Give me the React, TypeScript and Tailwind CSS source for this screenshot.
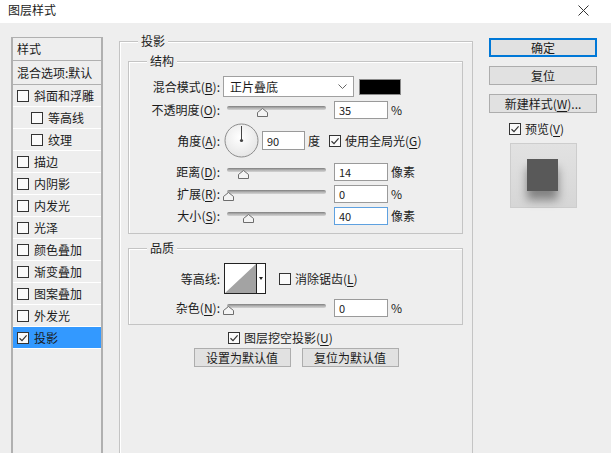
import type { ReactNode } from "react";

const effects = [
  { label: "斜面和浮雕" },
  { label: "等高线", indent: true },
  { label: "纹理", indent: true },
  { label: "描边" },
  { label: "内阴影" },
  { label: "内发光" },
  { label: "光泽" },
  { label: "颜色叠加" },
  { label: "渐变叠加" },
  { label: "图案叠加" },
  { label: "外发光" },
  { label: "投影", checked: true, active: true },
];

function CheckBox({ checked = false }: { checked?: boolean }) {
  return (
    <span className="flex h-[12px] w-[12px] shrink-0 items-center justify-center border border-[#333] bg-[#fafafa]">
      {checked && (
        <svg width="10" height="10" viewBox="0 0 10 10">
          <path d="M1.5 5.2 L4 7.6 L8.6 2.4" fill="none" stroke="#333" strokeWidth="1.2" />
        </svg>
      )}
    </span>
  );
}

function Key({ k }: { k: string }) {
  return (
    <>
      (<span className="underline underline-offset-2">{k}</span>)
    </>
  );
}

function Label({ children }: { children: ReactNode }) {
  return <div className="w-[91px] shrink-0 text-right whitespace-nowrap">{children}</div>;
}

function Slider({ pos }: { pos: number }) {
  return (
    <div className="relative ml-[7px] h-[18px] w-[99px] shrink-0">
      <div className="absolute left-0 right-0 top-[5px] h-[4px] rounded-full bg-gradient-to-b from-[#7e7e7e] via-[#b2b2b2] to-[#d4d4d4]" />
      <svg
        className="absolute top-[7px]"
        style={{ left: pos - 5 }}
        width="11"
        height="9"
        viewBox="0 0 11 9"
      >
        <path d="M0.5 4.5 L5.5 0.5 L10.5 4.5 L10.5 8.5 L0.5 8.5 Z" fill="#f4f4f4" stroke="#6d6d6d" />
      </svg>
    </div>
  );
}

function NumInput({ value, focused = false }: { value: string; focused?: boolean }) {
  return (
    <div
      className={`ml-[8px] flex h-[18px] w-[54px] shrink-0 items-center border bg-white pl-[4px] text-[11px] ${
        focused ? "border-[#5ea1e0]" : "border-[#9a9a9a]"
      }`}
    >
      {value}
    </div>
  );
}

function GroupBox({ title, className, children }: { title: string; className: string; children: ReactNode }) {
  return (
    <div className={`relative border border-[#c4c4c4] shadow-[inset_1px_1px_0_#ffffff] ${className}`}>
      <span className="absolute left-[18px] top-[-9px] bg-[#eeeeee] px-[3px] leading-[16px]">{title}</span>
      {children}
    </div>
  );
}

function Button({ children, primary = false, className = "" }: { children: ReactNode; primary?: boolean; className?: string }) {
  return (
    <div
      className={`flex h-[19px] items-center justify-center border bg-[#e1e1e1] leading-none ${
        primary ? "border-[#0078d7] shadow-[inset_0_0_0_1px_#0078d7]" : "border-[#adadad]"
      } ${className}`}
    >
      {children}
    </div>
  );
}

export default function App() {
  return (
    <div className="h-[453px] w-[611px] overflow-hidden bg-[#eeeeee] font-['Noto_Sans_CJK_SC',sans-serif] text-[12px] leading-[16px] text-[#1b1b1b]">
      {/* title bar */}
      <div className="flex h-[23px] items-center justify-between bg-white pl-[8px] pr-[22px]">
        <span className="-mt-[3px]">图层样式</span>
        <svg className="-mt-[3px]" width="11" height="11" viewBox="0 0 11 11">
          <path d="M0.5 0.5 L10.5 10.5 M10.5 0.5 L0.5 10.5" stroke="#333" strokeWidth="1" />
        </svg>
      </div>

      <div className="flex pl-[11px]">
        {/* effects list */}
        <div className="mt-[14px] h-[420px] w-[92px] shrink-0 border-x-2 border-t border-[#b0b0b0]">
          <div className="flex h-[23px] items-center border-b border-[#b0b0b0] pl-[4px]">样式</div>
          <div className="flex h-[24px] items-center border-b border-[#b0b0b0] pl-[4px] whitespace-nowrap">
            混合选项:默认
          </div>
          {effects.map((item) => (
            <div
              key={item.label}
              className={`flex h-[22px] items-center gap-[5px] border-b border-white ${
                item.indent ? "pl-[18px]" : "pl-[4px]"
              } ${item.active ? "bg-[#3399ff]" : ""}`}
            >
              <CheckBox checked={item.checked} />
              <span>{item.label}</span>
            </div>
          ))}
        </div>

        {/* main panel */}
        <div className="relative ml-[16px] mt-[18px] h-[430px] w-[354px] shrink-0 border border-[#c4c4c4] shadow-[inset_1px_1px_0_#ffffff]">
          <span className="absolute left-[18px] top-[-9px] bg-[#eeeeee] px-[3px] leading-[16px]">投影</span>

          <GroupBox title="结构" className="ml-[8px] mt-[19px] w-[335px] pb-[8px]">
            <div className="mt-[14px] flex h-[21px] items-center">
              <Label>
                混合模式<Key k="B" />:
              </Label>
              <div className="ml-[3px] flex h-[21px] w-[131px] items-center justify-between border border-[#a0a0a0] bg-white pl-[6px] pr-[6px]">
                <span>正片叠底</span>
                <svg width="9" height="6" viewBox="0 0 9 6">
                  <path d="M0.5 0.5 L4.5 4.5 L8.5 0.5" fill="none" stroke="#666" />
                </svg>
              </div>
              <div className="ml-[5px] h-[16px] w-[42px] border border-[#8a8a8a] bg-black" />
            </div>

            <div className="mt-[4px] flex h-[18px] items-center">
              <Label>
                不透明度<Key k="O" />:
              </Label>
              <Slider pos={35} />
              <NumInput value="35" />
              <span className="ml-[3px]">%</span>
            </div>

            <div className="mt-[4px] flex h-[35px] items-center">
              <Label>
                角度<Key k="A" />:
              </Label>
              <svg className="ml-[4px] shrink-0" width="35" height="35" viewBox="0 0 35 35">
                <defs>
                  <radialGradient id="dial" cx="45%" cy="40%" r="60%">
                    <stop offset="0" stopColor="#ffffff" />
                    <stop offset="1" stopColor="#e6e6e6" />
                  </radialGradient>
                </defs>
                <circle cx="17.5" cy="17.5" r="16.5" fill="url(#dial)" stroke="#8c8c8c" />
                <line x1="17.5" y1="3" x2="17.5" y2="17.5" stroke="#444" strokeWidth="1" />
                <circle cx="17.5" cy="17.5" r="1.6" fill="#444" />
              </svg>
              <div className="ml-[3px] flex h-[19px] w-[43px] shrink-0 items-center border border-[#9a9a9a] bg-white pl-[4px] text-[11px]">
                90
              </div>
              <span className="ml-[3px]">度</span>
              <span className="ml-[9px]">
                <CheckBox checked />
              </span>
              <span className="ml-[4px] whitespace-nowrap">
                使用全局光<Key k="G" />
              </span>
            </div>

            <div className="mt-[5px] flex h-[18px] items-center">
              <Label>
                距离<Key k="D" />:
              </Label>
              <Slider pos={16} />
              <NumInput value="14" />
              <span className="ml-[3px]">像素</span>
            </div>

            <div className="mt-[4px] flex h-[18px] items-center">
              <Label>
                扩展<Key k="R" />:
              </Label>
              <Slider pos={1} />
              <NumInput value="0" />
              <span className="ml-[3px]">%</span>
            </div>

            <div className="mt-[4px] flex h-[18px] items-center">
              <Label>
                大小<Key k="S" />:
              </Label>
              <Slider pos={21} />
              <NumInput value="40" focused />
              <span className="ml-[3px]">像素</span>
            </div>
          </GroupBox>

          <GroupBox title="品质" className="ml-[8px] mt-[14px] w-[335px] pb-[7px]">
            <div className="mt-[14px] flex h-[31px] items-center">
              <Label>等高线:</Label>
              <svg className="ml-[4px] shrink-0" width="42" height="31" viewBox="0 0 42 31">
                <rect x="0.5" y="0.5" width="41" height="30" fill="#ffffff" stroke="#222" />
                <path d="M1 30 L32 1 L32 30 Z" fill="#a3a3a3" />
                <line x1="32.5" y1="1" x2="32.5" y2="30" stroke="#222" />
                <path d="M35 14 L39 14 L37 17 Z" fill="#222" />
              </svg>
              <span className="ml-[13px]">
                <CheckBox />
              </span>
              <span className="ml-[4px] whitespace-nowrap">
                消除锯齿<Key k="L" />
              </span>
            </div>

            <div className="mt-[5px] flex h-[18px] items-center">
              <Label>
                杂色<Key k="N" />:
              </Label>
              <Slider pos={1} />
              <NumInput value="0" />
              <span className="ml-[3px]">%</span>
            </div>
          </GroupBox>

          <div className="ml-[108px] mt-[6px] flex h-[13px] items-center gap-[4px]">
            <CheckBox checked />
            <span className="whitespace-nowrap">
              图层挖空投影<Key k="U" />
            </span>
          </div>

          <div className="mt-[4px] flex justify-center gap-[11px]">
            <Button className="w-[97px]">设置为默认值</Button>
            <Button className="w-[97px]">复位为默认值</Button>
          </div>
        </div>

        {/* right column */}
        <div className="ml-[16px] mt-[15px] flex w-[108px] shrink-0 flex-col">
          <Button primary>确定</Button>
          <Button className="mt-[9px]">复位</Button>
          <Button className="mt-[9px]">
            新建样式(<span className="underline underline-offset-2">W</span>)...
          </Button>
          <div className="ml-[20px] mt-[9px] flex h-[13px] items-center gap-[4px]">
            <CheckBox checked />
            <span className="whitespace-nowrap">
              预览<Key k="V" />
            </span>
          </div>
          <div className="ml-[21px] mt-[8px] h-[65px] w-[67px] border border-[#cdcdcd] bg-gradient-to-b from-[#e2e2e2] to-[#d6d6d6] pl-[16px] pt-[15px]">
            <div className="h-[32px] w-[31px] bg-[#595959] shadow-[0_9px_9px_rgba(0,0,0,0.4)]" />
          </div>
        </div>
      </div>
    </div>
  );
}
